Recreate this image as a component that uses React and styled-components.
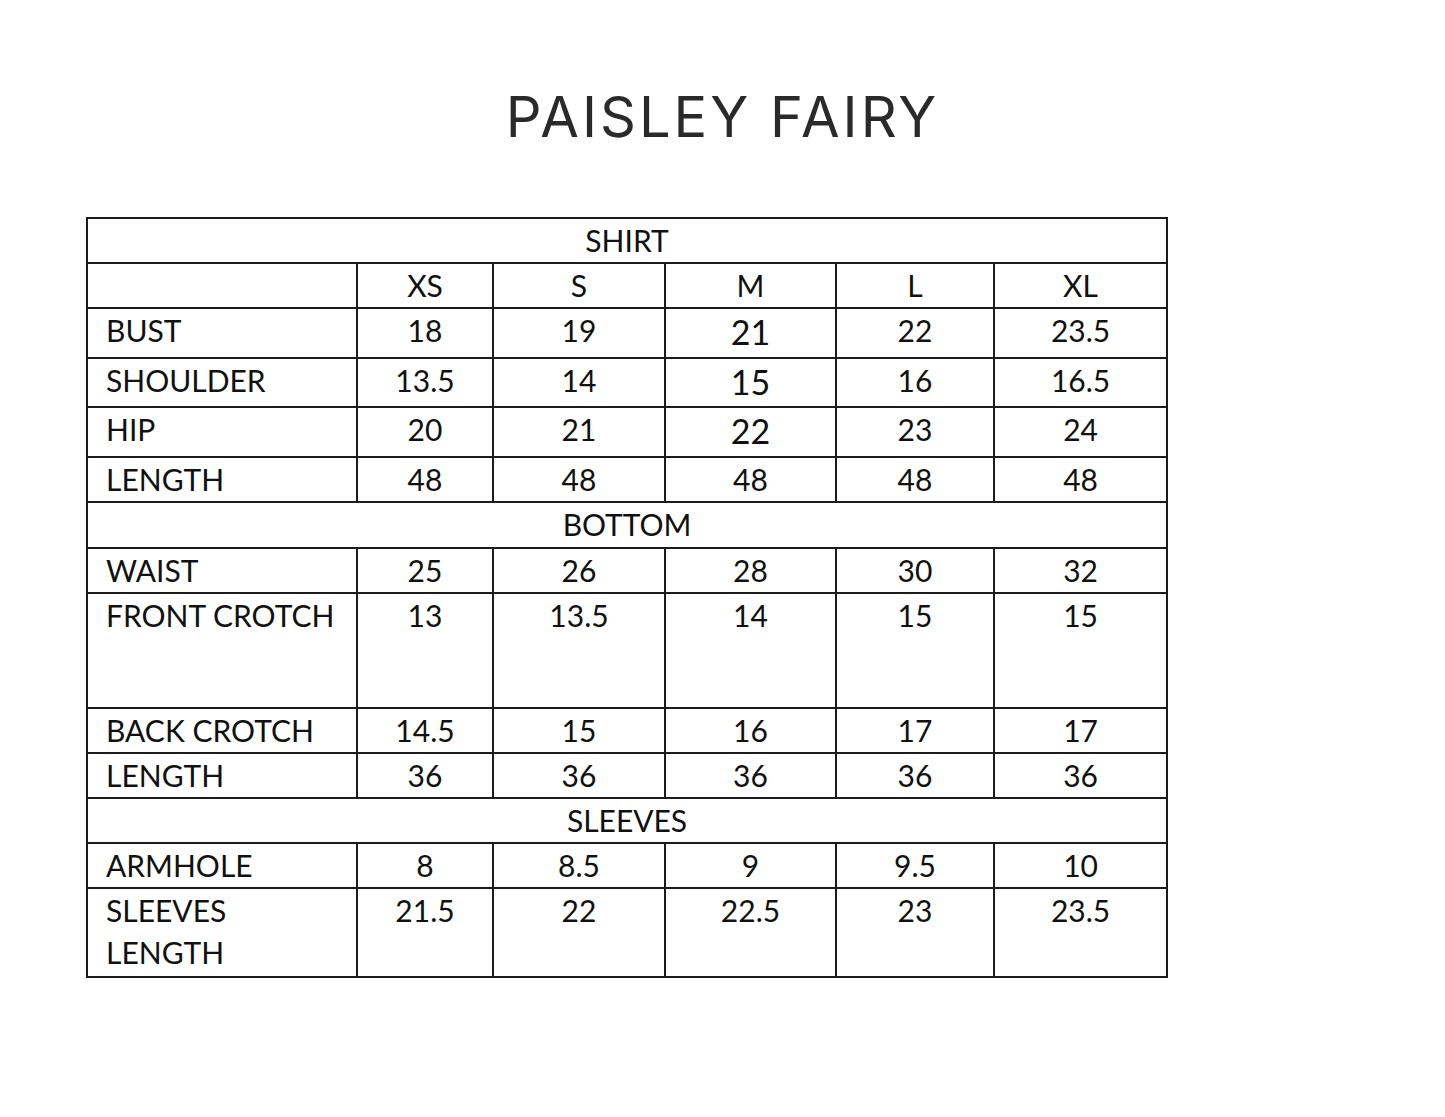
import React from 'react'
import styled, { createGlobalStyle } from 'styled-components'

const GlobalStyle = createGlobalStyle`
  html, body {
    margin: 0;
    padding: 0;
    background: #ffffff;
  }
`

const sizes = ['XS', 'S', 'M', 'L', 'XL']
const colWidths = [270, 136, 172, 171, 158, 173]

const sections = [
  {
    title: 'SHIRT',
    height: 45,
    header: true,
    rows: [
      { label: 'BUST', values: ['18', '19', '21', '22', '23.5'], height: 50, bigM: true },
      { label: 'SHOULDER', values: ['13.5', '14', '15', '16', '16.5'], height: 49, bigM: true },
      { label: 'HIP', values: ['20', '21', '22', '23', '24'], height: 50, bigM: true },
      { label: 'LENGTH', values: ['48', '48', '48', '48', '48'], height: 45 },
    ],
  },
  {
    title: 'BOTTOM',
    height: 46,
    rows: [
      { label: 'WAIST', values: ['25', '26', '28', '30', '32'], height: 45 },
      { label: 'FRONT CROTCH', values: ['13', '13.5', '14', '15', '15'], height: 115 },
      { label: 'BACK CROTCH', values: ['14.5', '15', '16', '17', '17'], height: 45 },
      { label: 'LENGTH', values: ['36', '36', '36', '36', '36'], height: 45 },
    ],
  },
  {
    title: 'SLEEVES',
    height: 45,
    rows: [
      { label: 'ARMHOLE', values: ['8', '8.5', '9', '9.5', '10'], height: 45 },
      { label: ['SLEEVES', 'LENGTH'], values: ['21.5', '22', '22.5', '23', '23.5'], height: 89 },
    ],
  },
]

const Page = styled.main`
  width: 1445px;
  min-height: 1117px;
  background: #ffffff;
  padding-top: 84px;
  box-sizing: border-box;
`

const Title = styled.h1`
  margin: 0;
  text-align: center;
  font-family: Inter, 'Noto Sans', sans-serif;
  font-weight: 400;
  font-size: 56px;
  line-height: 66px;
  letter-spacing: 3px;
  color: #2a2a2a;
`

const Chart = styled.table`
  margin: 67px 0 0 86px;
  border-collapse: collapse;
  table-layout: fixed;
  width: 1081px;
  font-family: Lato, 'Open Sans', sans-serif;
  color: #111111;
  td {
    border: 2px solid #1c1c1c;
    padding: 0;
    vertical-align: top;
    font-size: 30px;
    line-height: 42px;
    box-sizing: border-box;
  }
`

const SectionCell = styled.td`
  text-align: center;
`

const LabelCell = styled.td`
  text-align: left;
  padding-left: 18px !important;
`

const ValueCell = styled.td`
  text-align: center;
  font-size: ${p => (p.$big ? '34px' : '30px')} !important;
  line-height: ${p => (p.$big ? '45px' : '42px')} !important;
`

const Row = styled.tr`
  height: ${p => p.$h}px;
`

export default function App() {
  return (
    <Page>
      <GlobalStyle />
      <Title>PAISLEY FAIRY</Title>
      <Chart>
        <colgroup>
          {colWidths.map((w, i) => (
            <col key={i} style={{ width: w }} />
          ))}
        </colgroup>
        <tbody>
          {sections.map(section => (
            <React.Fragment key={section.title}>
              <Row $h={section.height}>
                <SectionCell colSpan={6}>{section.title}</SectionCell>
              </Row>
              {section.header && (
                <Row $h={45}>
                  <LabelCell />
                  {sizes.map(s => (
                    <ValueCell key={s}>{s}</ValueCell>
                  ))}
                </Row>
              )}
              {section.rows.map((row, ri) => (
                <Row key={ri} $h={row.height}>
                  <LabelCell>
                    {Array.isArray(row.label)
                      ? row.label.map((l, li) => <div key={li}>{l}</div>)
                      : row.label}
                  </LabelCell>
                  {row.values.map((v, vi) => (
                    <ValueCell key={vi} $big={row.bigM && vi === 2}>
                      {v}
                    </ValueCell>
                  ))}
                </Row>
              ))}
            </React.Fragment>
          ))}
        </tbody>
      </Chart>
    </Page>
  )
}
